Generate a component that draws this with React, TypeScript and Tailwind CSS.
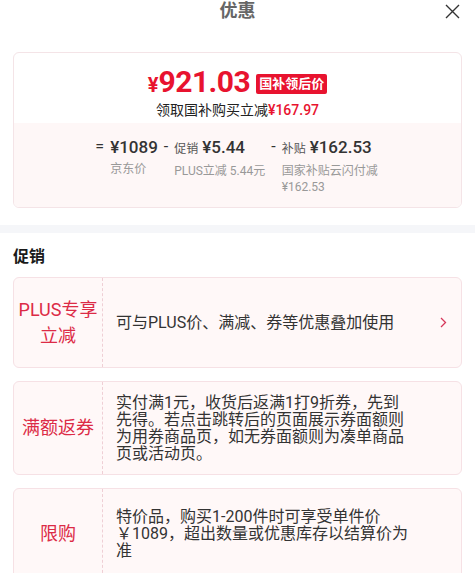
import React from "react";

type Part = { sign: string; tag?: string; price: string; label: string; wide?: boolean };

const parts: Part[] = [
  { sign: "=", price: "¥1089", label: "京东价" },
  { sign: "-", tag: "促销", price: "¥5.44", label: "PLUS立减 5.44元" },
  { sign: "-", tag: "补贴", price: "¥162.53", label: "国家补贴云闪付减¥162.53", wide: true },
];

type Promo = { title: string; text: string; arrow?: boolean };

const promos: Promo[] = [
  { title: "PLUS专享立减", text: "可与PLUS价、满减、券等优惠叠加使用", arrow: true },
  {
    title: "满额返券",
    text: "实付满1元，收货后返满1打9折券，先到先得。若点击跳转后的页面展示券面额则为用券商品页，如无券面额则为凑单商品页或活动页。",
  },
  { title: "限购", text: "特价品，购买1-200件时可享受单件价 ￥1089，超出数量或优惠库存以结算价为准" },
];

function PriceBreakdown() {
  return (
    <div className="flex justify-center gap-[6px] bg-[#fef7f7] pt-[12px] pb-[12px]">
      {parts.map((p) => (
        <div key={p.price} className="flex items-start gap-[6px]">
          <span className="text-[16px] leading-[24px] text-[#333]">{p.sign}</span>
          <div className="flex flex-col">
            <div className="flex items-baseline gap-[4px] leading-[24px]">
              {p.tag && <span className="text-[12px] text-[#555]">{p.tag}</span>}
              <span className="text-[17px] font-medium text-[#333]">{p.price}</span>
            </div>
            <span className={`mt-[2px] text-[12px] leading-[16px] text-[#999] ${p.wide ? "max-w-[98px]" : "whitespace-nowrap"}`}>
              {p.label}
            </span>
          </div>
        </div>
      ))}
    </div>
  );
}

function PromoCard({ promo }: { promo: Promo }) {
  return (
    <div className="flex min-h-[91px] rounded-[6px] border border-[#f6e1e5] bg-[#fff8f8]">
      <div className="flex w-[89px] shrink-0 items-center justify-center border-r border-dashed border-[#efcfd5] px-[4px] text-center text-[18px] leading-[26px] text-[#dc2b46]">
        {promo.title}
      </div>
      <div className="flex flex-1 items-center">
        <p className="flex-1 py-[12px] pl-[13px] text-[16px] leading-[17px] text-[#333]">{promo.text}</p>
        <div className="flex w-[47px] shrink-0 justify-end pr-[14px]">
          {promo.arrow && (
            <svg width="7" height="11" viewBox="0 0 7 11" fill="none">
              <path d="M1 1l4.5 4.5L1 10" stroke="#d6375a" strokeWidth="1.3" />
            </svg>
          )}
        </div>
      </div>
    </div>
  );
}

export default function App() {
  return (
    <div className="min-h-screen w-full bg-white font-['Roboto','Noto_Sans_CJK_SC',sans-serif] text-[#333]">
      <div className="relative flex h-[22px] items-center justify-center">
        <h1 className="text-[18px] font-bold leading-[22px] text-[#666]">优惠</h1>
        <button className="absolute right-[15px] top-[4px]">
          <svg width="15" height="15" viewBox="0 0 15 15" fill="none">
            <path d="M1 1l13 13M14 1L1 14" stroke="#333" strokeWidth="1.4" />
          </svg>
        </button>
      </div>

      <div className="mx-[13px] mt-[30px] overflow-hidden rounded-[6px] border border-[#f4e4e7]">
        <div className="flex flex-col items-center pt-[14px] pb-[4px]">
          <div className="flex items-center">
            <span className="flex items-baseline font-bold leading-[30px] text-[#e8132f]">
              <span className="text-[20px]">¥</span>
              <span className="text-[30px] tracking-[-0.5px]">921.03</span>
            </span>
            <span className="ml-[6px] h-[20px] rounded-[2px] bg-[#e8132f] px-[3px] text-[13px] font-bold leading-[20px] text-white">
              国补领后价
            </span>
          </div>
          <p className="mt-[1px] text-[14px] leading-[18px] text-[#222]">
            领取国补购买立减<span className="font-medium text-[#e8132f]">¥167.97</span>
          </p>
        </div>
        <PriceBreakdown />
      </div>

      <div className="mt-[17px] h-[8px] bg-[#f5f6f9]" />

      <h2 className="mt-[15px] pl-[13px] text-[16px] font-bold leading-[18px] text-[#1a1a1a]">促销</h2>

      <div className="mx-[13px] mt-[11px] flex flex-col gap-[13px]">
        {promos.map((p) => (
          <PromoCard key={p.title} promo={p} />
        ))}
      </div>
    </div>
  );
}
